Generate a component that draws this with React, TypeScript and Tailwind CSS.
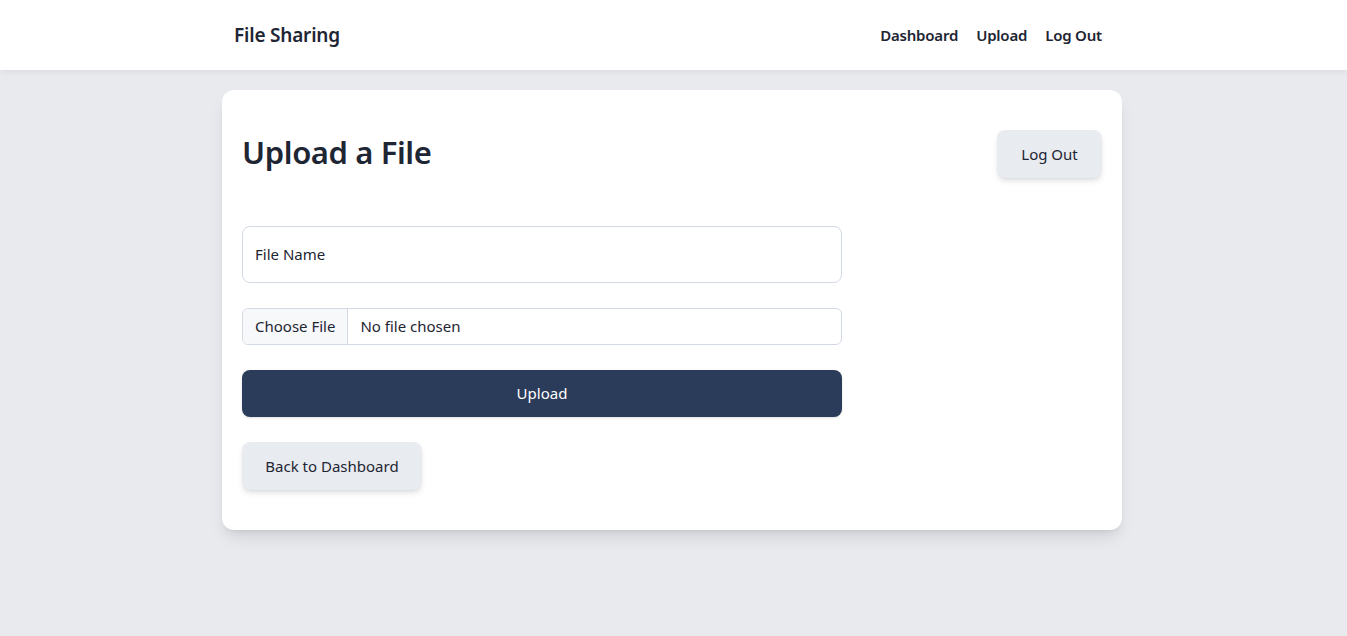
import React from 'react';

export default function App() {
  return (
    <div className="min-h-[636px] bg-[#e8eaee] text-[#1e2533] font-['Noto_Sans',sans-serif] pr-[3px]">
      <nav className="bg-white shadow-[0_2px_6px_rgba(0,0,0,0.06)] h-[70px] -mr-[3px] relative">
        <div className="w-[900px] mx-auto pl-3 pr-5 h-full flex items-center justify-between relative -left-[1.5px]">
          <span className="text-[19px] font-semibold tracking-[-0.2px]">File Sharing</span>
          <div className="flex items-center gap-[18px] text-[15px] font-semibold tracking-[-0.2px]">
            <a href="#">Dashboard</a>
            <a href="#">Upload</a>
            <a href="#">Log Out</a>
          </div>
        </div>
      </nav>

      <main className="w-[900px] mx-auto mt-5 bg-white rounded-xl shadow-lg px-5 pt-10 pb-10">
        <div className="flex items-center justify-between h-12">
          <h1 className="text-[31px] font-semibold tracking-[-0.4px] leading-none -mt-1">Upload a File</h1>
          <button className="h-12 w-[105px] rounded-lg bg-[#e8ebef] shadow-md text-[15px]">Log Out</button>
        </div>

        <form className="w-[600px] mt-12 flex flex-col gap-[25px]">
          <div className="h-[57px] rounded-lg border border-[#d3dae6] flex items-center px-3 text-[15px]">
            File Name
          </div>
          <div className="h-[37px] rounded-md border border-[#d3dae6] flex items-center text-[15px] overflow-hidden">
            <span className="h-full flex items-center px-3 bg-[#f6f8fa] border-r border-[#d3dae6]">Choose File</span>
            <span className="px-3">No file chosen</span>
          </div>
          <button type="button" className="h-[47px] rounded-lg bg-[#2b3b5a] text-white text-[15px] shadow-sm">
            Upload
          </button>
          <button type="button" className="h-12 w-[180px] rounded-lg bg-[#e8ebef] shadow-md text-[15px]">
            Back to Dashboard
          </button>
        </form>
      </main>
    </div>
  );
}
